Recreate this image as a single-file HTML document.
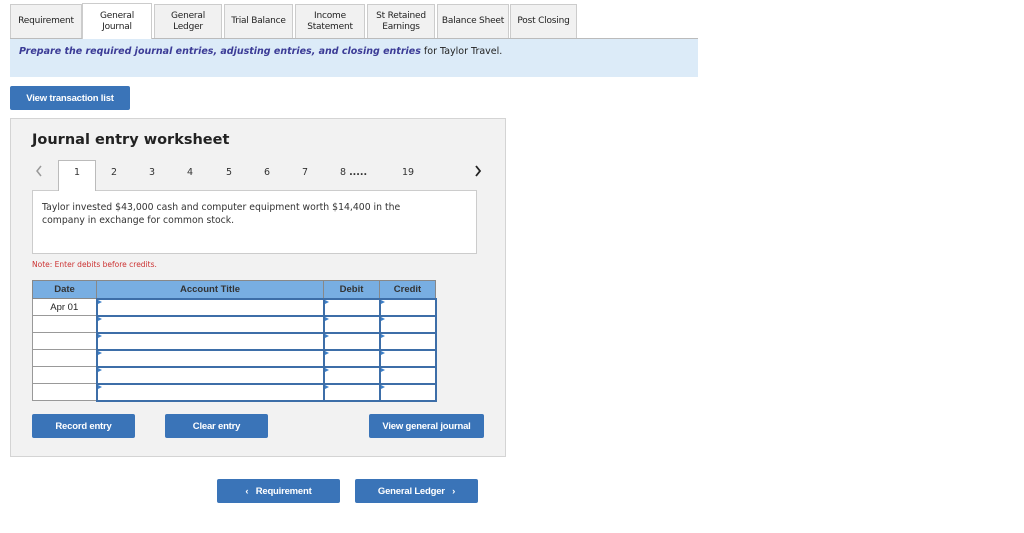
<!DOCTYPE html>
<html><head><style>
*{box-sizing:border-box;margin:0;padding:0}
body{width:1024px;height:533px;background:#fff;position:relative;font-family:"DejaVu Sans",Verdana,sans-serif;overflow:hidden;color:#222}
.a{position:absolute}
.tab{position:absolute;top:4px;height:34px;background:#f1f1f1;border:1px solid #ccc;border-bottom:none;font-size:9px;line-height:11px;text-align:center;display:flex;align-items:center;justify-content:center;letter-spacing:-0.2px}
.tab.on{background:#fff;top:3px;height:36px;z-index:2}
.btn{position:absolute;background:#3a74b8;color:#fff;font-family:"Liberation Sans",Arial,sans-serif;font-weight:bold;font-size:9.5px;display:flex;align-items:center;justify-content:center;border-radius:2px;letter-spacing:-0.2px}
table{border-collapse:collapse;position:absolute;left:32px;top:280px}
td{border:1px solid #999;height:17px;padding:0;font-family:"Liberation Sans",Arial,sans-serif;font-size:9.5px;text-align:center;position:relative}
th{background:#78aee2;border:1px solid #888;height:18px;font-family:"Liberation Sans",Arial,sans-serif;font-size:9.5px;color:#333}
td.i{border:2px solid #3d6ea8;background:#fff}
td.i:before{content:"";position:absolute;left:0;top:0;border-left:4px solid #3d7fc7;border-top:2px solid transparent;border-bottom:2px solid transparent}
.n{position:absolute;top:167px;font-size:9.5px;color:#333}
</style></head><body>
<div style="position:absolute;left:10px;top:38px;width:688px;height:1px;background:#bbb"></div>
<div class="tab" style="left:10px;width:72px">Requirement</div>
<div class="tab on" style="left:82px;width:70px">General<br>Journal</div>
<div class="tab" style="left:154px;width:68px">General<br>Ledger</div>
<div class="tab" style="left:224px;width:69px">Trial Balance</div>
<div class="tab" style="left:295px;width:70px">Income<br>Statement</div>
<div class="tab" style="left:367px;width:68px">St Retained<br>Earnings</div>
<div class="tab" style="left:437px;width:72px">Balance Sheet</div>
<div class="tab" style="left:510px;width:67px">Post Closing</div>
<div class="a" style="left:10px;top:39px;width:688px;height:38px;background:#dcebf8;font-size:9.5px;padding:7px 0 0 9px">
<b style="color:#3b3b96;font-style:italic">Prepare the required journal entries, adjusting entries, and closing entries</b> for Taylor Travel.</div>
<div class="btn" style="left:10px;top:86px;width:120px;height:24px">View transaction list</div>
<div class="a" style="left:10px;top:118px;width:496px;height:339px;background:#f2f2f2;border:1px solid #d4d4d4"></div>
<div class="a" style="left:32px;top:132px;font-size:14.5px;font-weight:bold;color:#222">Journal entry worksheet</div>
<svg class="a" style="left:34px;top:164px" width="10" height="14"><path d="M7 2 L3 7 L7 12" stroke="#999" stroke-width="1.5" fill="none"/></svg>
<div class="a" style="left:58px;top:160px;width:38px;height:31px;background:#fff;border:1px solid #bbb;border-bottom:none;z-index:2"></div>
<div class="n" style="left:74px;z-index:3">1</div>
<div class="n" style="left:111px">2</div><div class="n" style="left:149px">3</div><div class="n" style="left:187px">4</div><div class="n" style="left:226px">5</div><div class="n" style="left:264px">6</div><div class="n" style="left:302px">7</div><div class="n" style="left:340px">8 <b>.....</b></div><div class="n" style="left:402px">19</div>
<svg class="a" style="left:473px;top:164px" width="10" height="14"><path d="M3 2 L7 7 L3 12" stroke="#222" stroke-width="1.8" fill="none"/></svg>
<div class="a" style="left:32px;top:190px;width:445px;height:64px;background:#fff;border:1px solid #ccc;font-size:9.3px;line-height:13px;padding:10px 9px;color:#333">Taylor invested $43,000 cash and computer equipment worth $14,400 in the<br>company in exchange for common stock.</div>
<div class="a" style="left:32px;top:260px;font-size:7.5px;color:#c33">Note: Enter debits before credits.</div>
<table>
<tr><th style="width:64px">Date</th><th style="width:227px">Account Title</th><th style="width:56px">Debit</th><th style="width:56px">Credit</th></tr>
<tr><td style="background:#fff">Apr 01</td><td class="i"></td><td class="i"></td><td class="i"></td></tr>
<tr><td style="background:#fff"></td><td class="i"></td><td class="i"></td><td class="i"></td></tr>
<tr><td style="background:#fff"></td><td class="i"></td><td class="i"></td><td class="i"></td></tr>
<tr><td style="background:#fff"></td><td class="i"></td><td class="i"></td><td class="i"></td></tr>
<tr><td style="background:#fff"></td><td class="i"></td><td class="i"></td><td class="i"></td></tr>
<tr><td style="background:#fff"></td><td class="i"></td><td class="i"></td><td class="i"></td></tr>
</table>
<div class="btn" style="left:32px;top:414px;width:103px;height:24px">Record entry</div>
<div class="btn" style="left:165px;top:414px;width:103px;height:24px">Clear entry</div>
<div class="btn" style="left:369px;top:414px;width:115px;height:24px">View general journal</div>
<div class="btn" style="left:217px;top:479px;width:123px;height:24px">‹&nbsp;&nbsp;&nbsp;Requirement</div>
<div class="btn" style="left:355px;top:479px;width:123px;height:24px">General Ledger&nbsp;&nbsp;&nbsp;›</div>
</body></html>
